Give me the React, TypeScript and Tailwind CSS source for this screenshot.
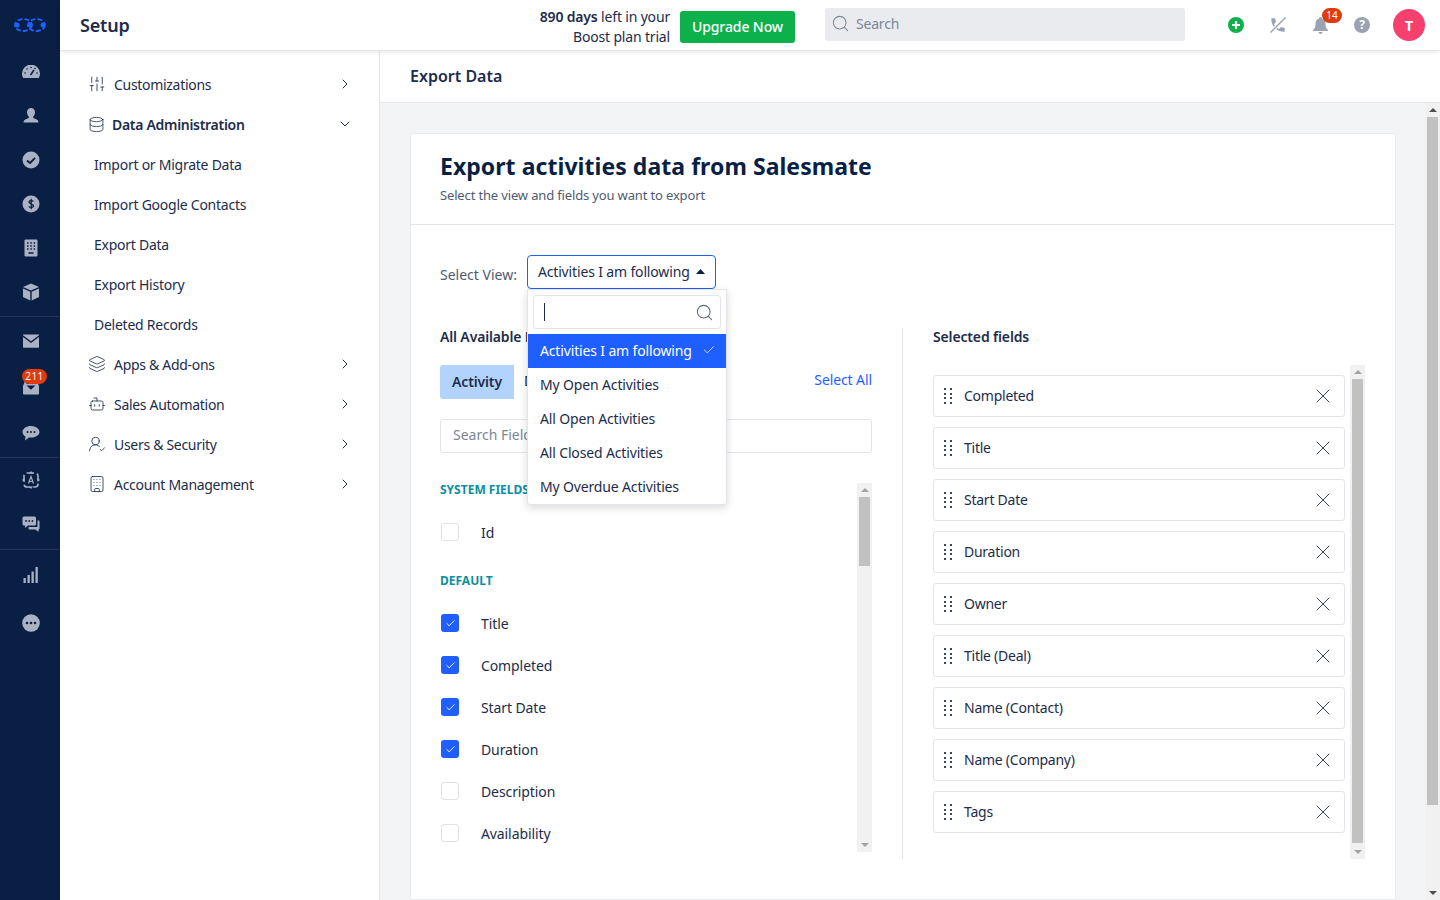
import React from 'react';
import { ChevronRight, ChevronDown, Search, Check, X, SlidersVertical, Database, Layers, Bot, UserRoundCheck, Building } from 'lucide-react';

const RailIcon = ({ children, y }: { children: React.ReactNode; y?: string }) => (
  <div className={`flex h-11 w-[60px] items-center justify-center pl-[2px] ${y || ''}`}>
    <svg width="18" height="18" viewBox="0 0 18 18" fill="#a9b2c3">{children}</svg>
  </div>
);

const Rail = () => (
  <div className="flex w-[60px] shrink-0 flex-col bg-[#0a1f44]">
    <div className="flex h-[50px] items-center justify-center">
      <svg width="32" height="14" viewBox="0 0 32 14" fill="none">
        <ellipse cx="9.5" cy="7" rx="8.5" ry="6" stroke="#1f5eff" strokeWidth="1.8" strokeDasharray="5 2" />
        <ellipse cx="22.5" cy="7" rx="8.5" ry="6" stroke="#1f5eff" strokeWidth="1.8" strokeDasharray="5 2" />
        <circle cx="3" cy="7" r="2.5" fill="#1f5eff" /><circle cx="16" cy="7" r="2.5" fill="#1f5eff" /><circle cx="29" cy="7" r="2.5" fill="#1f5eff" />
      </svg>
    </div>
    <RailIcon>
      <path d="M9 1.5A9 9 0 0 0 0 10.5c0 1.700.5 3.200 1.300 4.500h15.400c.8-1.300 1.300-2.800 1.300-4.500a9 9 0 0 0-9-9z" />
      <path d="M8.5 12 12 7" stroke="#0a1f44" strokeWidth="1.5" />
      <circle cx="5" cy="6" r=".8" fill="#0a1f44" /><circle cx="9" cy="4.5" r=".8" fill="#0a1f44" /><circle cx="3" cy="10" r=".8" fill="#0a1f44" /><circle cx="13" cy="5.5" r=".8" fill="#0a1f44" /><circle cx="15" cy="10" r=".8" fill="#0a1f44" />
    </RailIcon>
    <RailIcon>
      <path d="M9 1c2.400 0 4 1.800 4 4.200 0 1.800-.8 3.300-1.800 4.300v1.500c2 .9 5.300 1.400 5.300 4.500h-15c0-3.100 3.300-3.600 5.300-4.500V9.500C5.800 8.500 5 7 5 5.200 5 2.800 6.600 1 9 1z" />
    </RailIcon>
    <RailIcon>
      <circle cx="9" cy="9" r="8.5" />
      <path d="M5 9.500 8 12l5-5" fill="none" stroke="#0a1f44" strokeWidth="1.8" />
    </RailIcon>
    <RailIcon>
      <circle cx="9" cy="9" r="8.5" />
      <path d="M11.500 6.500C11 5.500 7 5 7 7c0 2.200 4.500 1.500 4.500 4 0 2-4 1.700-4.700.5M9.200 3.800v10.400" fill="none" stroke="#0a1f44" strokeWidth="1.3" />
    </RailIcon>
    <RailIcon>
      <rect x="2.5" y=".5" width="13" height="17" rx="1" />
      <path d="M5 4h1.500M8.300 4h1.500M11.600 4h1.500M5 7h1.500M8.300 7h1.500M11.600 7h1.500M5 10h1.500M8.300 10h1.500M11.600 10h1.500M6.500 14h5" stroke="#0a1f44" strokeWidth="1.3" />
    </RailIcon>
    <RailIcon>
      <path d="M9 .5 17 4 9 7.500 1 4z" />
      <path d="M1 5.500 8.300 8.800v8.700L1 14z" /><path d="M17 5.500 9.700 8.800v8.700L17 14z" />
    </RailIcon>
    <div className="mt-[2px] h-px w-[59px] bg-[#263857]" />
    <RailIcon y="mt-[2px]">
      <path d="M1 2.500h16v.7L9 9.300 1 3.200z" /><path d="M1 5 9 11l8-6v10a.8.8 0 0 1-.8.8H1.800A.8.800 0 0 1 1 15z" />
    </RailIcon>
    <div className="relative mt-[2px]">
      <RailIcon>
        <path d="M3 3h12l2 5v7.500a1 1 0 0 1-1 1H2a1 1 0 0 1-1-1V8z" />
        <path d="M4.500 5.500h9M6 8h6L9 11z" stroke="#0a1f44" strokeWidth="1.2" fill="#0a1f44" />
      </RailIcon>
      <div className="absolute left-[22px] top-[4px] flex h-[15px] w-[25px] items-center justify-center rounded-full bg-[#e03a0f] text-[10px] tracking-[0.4px] text-white">211</div>
    </div>
    <RailIcon y="mt-[2px]">
      <path d="M9 2C4.300 2 .5 4.700.5 8c0 1.900 1.200 3.500 3 4.600L3 16.500l4-3c.6.1 1.300.1 2 .1 4.700 0 8.500-2.600 8.500-5.600S13.700 2 9 2z" />
      <circle cx="5.5" cy="8" r="1" fill="#0a1f44" /><circle cx="9" cy="8" r="1" fill="#0a1f44" /><circle cx="12.5" cy="8" r="1" fill="#0a1f44" />
    </RailIcon>
    <div className="mt-[2px] h-px w-[59px] bg-[#263857]" />
    <RailIcon>
      <rect x="2" y="2" width="14" height="14" rx="3" fill="none" stroke="#a9b2c3" strokeWidth="1.6" strokeDasharray="7 3" />
      <path d="M6.500 12.500 9 5.500l2.500 7M7.500 10.500h3" fill="none" stroke="#a9b2c3" strokeWidth="1.2" />
      <path d="M0 9l2.500-2v4zM18 9l-2.500 2V7zM9 0l2 2.500H7zM9 18l-2-2.500h4z" />
    </RailIcon>
    <RailIcon>
      <path d="M2 1.500h10.500A1.500 1.500 0 0 1 14 3v6a1.500 1.500 0 0 1-1.500 1.500H6L3 13v-2.500H2A1.500 1.500 0 0 1 .5 9V3A1.500 1.500 0 0 1 2 1.500z" />
      <circle cx="4" cy="6" r=".9" fill="#0a1f44" /><circle cx="7.2" cy="6" r=".9" fill="#0a1f44" /><circle cx="10.4" cy="6" r=".9" fill="#0a1f44" />
      <path d="M15.500 5.500h1a1 1 0 0 1 1 1v7a1 1 0 0 1-1 1V17l-3-2.500H7.500a1 1 0 0 1-1-1V12h9z" />
    </RailIcon>
    <div className="mt-[3px] h-px w-[59px] bg-[#263857]" />
    <div className="flex h-[50px] items-center justify-center pl-[2px]">
      <svg width="18" height="18" viewBox="0 0 18 18" fill="#a9b2c3">
        <rect x="1.5" y="12" width="2.3" height="5" /><rect x="5.5" y="9" width="2.3" height="8" /><rect x="9.5" y="5.5" width="2.3" height="11.5" /><rect x="13.5" y="1" width="2.3" height="16" />
      </svg>
    </div>
    <RailIcon y="mt-px">
      <circle cx="9" cy="9" r="8.8" />
      <circle cx="5" cy="9" r="1.3" fill="#0a1f44" /><circle cx="9" cy="9" r="1.3" fill="#0a1f44" /><circle cx="13" cy="9" r="1.3" fill="#0a1f44" />
    </RailIcon>
  </div>
);

const TopBar = () => (
  <div className="relative z-10 flex h-[51px] shrink-0 items-center border-b border-[#e3e5ea] bg-white pl-5 shadow-[0_1px_4px_rgba(0,0,0,0.1)]">
    <div className="text-[18px] font-semibold tracking-[-0.2px] text-[#1d2c4b]">Setup</div>
    <div className="ml-auto mr-[10px] mt-[3px] text-right text-[14px] leading-5 tracking-[-0.17px] text-[#1d2c4b]">
      <div><span className="font-semibold">890 days</span> left in your</div>
      <div>Boost plan trial</div>
    </div>
    <button className="mt-[3px] flex h-8 w-[115px] items-center justify-center rounded-[3px] bg-[#0cb14b] text-[14px] font-medium tracking-[-0.1px] text-white">Upgrade Now</button>
    <div className="mb-[2px] ml-[30px] flex h-[33px] w-[360px] items-center gap-[6px] rounded-[3px] bg-[#e9ebef] pb-px pl-[6px] text-[14px] tracking-[-0.2px] text-[#7c8698]">
      <Search size={19} strokeWidth={1.3} />
      <span>Search</span>
    </div>
    <div className="ml-[43px] flex h-4 w-4 items-center justify-center rounded-full bg-[#0cb14b] text-white">
      <svg width="10" height="10" viewBox="0 0 10 10"><path d="M5 1v8M1 5h8" stroke="#fff" strokeWidth="2.2" /></svg>
    </div>
    <svg className="ml-[25px]" width="18" height="18" viewBox="0 0 24 24" fill="#9aa3b2">
      <path d="M6.620 10.790c1.440 2.830 3.760 5.140 6.590 6.590l2.200-2.200c.27-.27.67-.36 1.020-.24 1.120.37 2.330.57 3.570.57.55 0 1 .45 1 1V20c0 .55-.45 1-1 1-9.390 0-17-7.610-17-17 0-.55.45-1 1-1h3.500c.55 0 1 .45 1 1 0 1.250.2 2.450.57 3.570.11.35.03.74-.25 1.020l-2.200 2.200z" />
      <path d="M2 22 22 2" stroke="#fff" strokeWidth="4.5" />
      <path d="M2 22 22 2" stroke="#9aa3b2" strokeWidth="2" />
    </svg>
    <div className="relative ml-[25px]">
      <svg width="17" height="17" viewBox="0 0 17 17" fill="#9aa3b2">
        <path d="M8.500 0a1.300 1.300 0 0 1 1.300 1.500C12.300 2 13.500 4 13.500 6.500c0 4 1 5 2.500 6.500v1H1v-1c1.500-1.500 2.500-2.500 2.500-6.500C3.500 4 4.700 2 7.200 1.500A1.300 1.300 0 0 1 8.500 0z" />
        <path d="M6.500 15h4a2 2 0 0 1-4 0z" />
      </svg>
      <div className="absolute left-[10px] top-[-9px] flex h-[15px] w-5 items-center justify-center rounded-full bg-[#e03a0f] text-[10px] text-white">14</div>
    </div>
    <div className="ml-[25px] flex h-4 w-4 items-center justify-center rounded-full bg-[#9aa3b2] text-[12px] font-bold text-white">?</div>
    <div className="ml-[23px] mr-[15px] flex h-8 w-8 items-center justify-center rounded-full bg-[#f8406e] text-[14px] font-bold text-white">T</div>
  </div>
);

const NavItem = ({ icon, label }: { icon: React.ReactNode; label: string }) => (
  <div className="flex h-10 items-center pl-[28px] pr-[26px] text-[#1d2c4b]">
    <span className="flex w-[26px] text-[#1d2c4b]">{icon}</span>
    <span className="text-[14px] tracking-[-0.3px]">{label}</span>
    <ChevronRight className="ml-auto" size={16} strokeWidth={1.5} />
  </div>
);

const Nav = () => (
  <div className="w-[320px] shrink-0 border-r border-[#e3e5ea] bg-white pt-[13px]">
    <NavItem icon={<SlidersVertical size={18} strokeWidth={1.1} />} label="Customizations" />
    <div className="flex h-10 items-center pl-[28px] pr-[26px] text-[#1d2c4b]">
      <span className="flex w-[24px] text-[#1d2c4b]"><Database size={17} strokeWidth={1.1} /></span>
      <span className="text-[14px] font-semibold tracking-[-0.3px]">Data Administration</span>
      <ChevronDown className="ml-auto" size={16} strokeWidth={1.5} />
    </div>
    {['Import or Migrate Data', 'Import Google Contacts', 'Export Data', 'Export History', 'Deleted Records'].map((t) => (
      <div key={t} className="flex h-10 items-center pl-[34px] text-[14px] tracking-[-0.25px] text-[#1d2c4b]">{t}</div>
    ))}
    <NavItem icon={<Layers size={18} strokeWidth={1.1} />} label="Apps & Add-ons" />
    <NavItem icon={<Bot size={18} strokeWidth={1.1} />} label="Sales Automation" />
    <NavItem icon={<UserRoundCheck size={18} strokeWidth={1.1} />} label="Users & Security" />
    <NavItem icon={<Building size={18} strokeWidth={1.1} />} label="Account Management" />
  </div>
);

const Scrollbar = ({ className, thumb, arrow }: { className: string; thumb: string; arrow: string }) => (
  <div className={`flex flex-col items-center bg-[#f1f1f1] ${className}`}>
    <svg className="my-[5px] shrink-0" width="8" height="4" viewBox="0 0 8 4"><path d="M4 0l4 4H0z" fill={arrow} /></svg>
    <div className={`w-[11px] bg-[#c1c1c1] ${thumb}`} />
    <svg className="mb-[5px] mt-auto shrink-0" width="8" height="4" viewBox="0 0 8 4"><path d="M4 4 8 0H0z" fill={arrow} /></svg>
  </div>
);

const CheckRow = ({ label, on }: { label: string; on?: boolean }) => (
  <div className="flex h-[42px] items-center">
    {on ? (
      <div className="ml-px flex h-[18px] w-[18px] items-center justify-center rounded-[3px] bg-[#1f5eff] text-white"><Check size={11} strokeWidth={2} /></div>
    ) : (
      <div className="ml-px h-[18px] w-[18px] rounded-[3px] border border-[#dfe2e8] bg-white" />
    )}
    <span className="ml-[22px] text-[14px] tracking-[-0.1px] text-[#1d2c4b]">{label}</span>
  </div>
);

const Grip = () => (
  <svg className="shrink-0" width="10" height="16" viewBox="0 0 10 16" fill="#3a4763">
    {[0, 5, 9, 14].map((y) => (
      <React.Fragment key={y}><rect x="0" y={y} width="2" height="2" /><rect x="6" y={y} width="2" height="2" /></React.Fragment>
    ))}
  </svg>
);

const SelectedField = ({ label }: { label: string }) => (
  <div className="flex h-[42px] items-center rounded-[3px] border border-[#e3e5ea] bg-white pl-[10px] pr-[9px]">
    <Grip />
    <span className="mb-[2px] ml-[10px] text-[14px] tracking-[-0.25px] text-[#1d2c4b]">{label}</span>
    <X className="ml-auto text-[#3a4763]" size={24} strokeWidth={1} />
  </div>
);

const ViewDropdown = () => (
  <div className="absolute left-[116px] top-[64px] z-20 w-[200px] rounded-b-[3px] border border-[#e3e5ea] bg-white shadow-[0_3px_8px_rgba(0,0,0,0.15)]">
    <div className="mx-[5px] my-[5px] flex h-[34px] items-center justify-between rounded-[3px] border border-[#e3e5ea] pl-[10px] pr-[6px]">
      <div className="h-[18px] w-px bg-[#1d2c4b]" />
      <Search className="text-[#5c6779]" size={19} strokeWidth={1.3} />
    </div>
    <div className="flex h-[34px] items-center justify-between bg-[#1f5eff] pb-[2px] pl-3 pr-[10px] text-[14px] tracking-[-0.15px] text-white">
      Activities I am following
      <Check size={14} strokeWidth={1.3} />
    </div>
    {['My Open Activities', 'All Open Activities', 'All Closed Activities', 'My Overdue Activities'].map((t) => (
      <div key={t} className="flex h-[34px] items-center pb-[2px] pl-3 text-[14px] tracking-[-0.15px] text-[#1d2c4b]">{t}</div>
    ))}
  </div>
);

const App: React.FC = () => {
  return (
    <div className="flex h-[900px] w-[1440px] overflow-hidden bg-white font-['Noto_Sans',sans-serif]">
      <Rail />
      <div className="flex min-w-0 flex-1 flex-col">
        <TopBar />
        <div className="flex min-h-0 flex-1">
          <Nav />
          <div className="flex min-w-0 flex-1 flex-col">
            <div className="flex h-[52px] shrink-0 items-center border-b border-[#e3e5ea] bg-white pb-[2px] pl-[30px] text-[16px] font-semibold text-[#1d2c4b]">Export Data</div>
            <div className="flex min-h-0 flex-1 bg-[#f3f4f6]">
              <div className="ml-[30px] mt-[30px] w-[986px] shrink-0 rounded-t-[3px] border border-[#e9ebef] bg-white">
                <div className="h-[91px] border-b border-[#e3e5ea] pl-[29px] pt-[14px]">
                  <h1 className="text-[23px] font-bold leading-9 tracking-[0.05px] text-[#0a1f44]">Export activities data from Salesmate</h1>
                  <p className="mt-[2px] text-[13px] tracking-[-0.15px] text-[#4f5b70]">Select the view and fields you want to export</p>
                </div>
                <div className="relative pl-[29px] pr-[30px]">
                  <div className="flex items-start pt-[30px]">
                    <span className="mt-[9px] text-[14px] text-[#4f5b70]">Select View:</span>
                    <div className="ml-[10px] flex h-[34px] w-[189px] items-center justify-between rounded-[4px] border border-[#1f5eff] pb-[2px] pl-[10px] pr-[10px] text-[14px] tracking-[-0.15px] text-[#1d2c4b]">
                      Activities I am following
                      <svg width="9" height="5" viewBox="0 0 9 5"><path d="M4.500 0 9 5H0z" fill="#0a1f44" /></svg>
                    </div>
                  </div>
                  <ViewDropdown />
                  <div className="mt-[39px] flex">
                    <div className="w-[432px] shrink-0">
                      <div className="pt-px text-[14px] font-semibold leading-4 tracking-[-0.15px] text-[#1d2c4b]">All Available Fields</div>
                      <div className="mt-[20px] flex h-[34px] items-center justify-between">
                        <div className="flex items-center">
                          <div className="flex h-[34px] w-[74px] items-center justify-center rounded-l-[3px] bg-[#b3d3ff] pb-[2px] text-[14px] font-semibold tracking-[-0.15px] text-[#1d2c4b]">Activity</div>
                          <span className="mb-[3px] ml-[10px] text-[14px] text-[#1d2c4b]">Deal</span>
                        </div>
                        <span className="mb-[5px] text-[14px] tracking-[-0.1px] text-[#1f5eff]">Select All</span>
                      </div>
                      <div className="mt-[20px] flex h-[34px] items-center rounded-[3px] border border-[#e3e5ea] pb-[3px] pl-3 text-[14px] text-[#7c8698]">Search Fields</div>
                      <div className="mt-[30px] flex h-[369px]">
                        <div className="-mt-[2px] min-w-0 flex-1">
                          <div className="text-[12px] font-bold text-[#0a8fa3]">SYSTEM FIELDS</div>
                          <div className="mt-[12px]"><CheckRow label="Id" /></div>
                          <div className="mt-[19px] text-[12px] font-bold text-[#0a8fa3]">DEFAULT</div>
                          <div className="mt-[12px]">
                            <CheckRow label="Title" on />
                            <CheckRow label="Completed" on />
                            <CheckRow label="Start Date" on />
                            <CheckRow label="Duration" on />
                            <CheckRow label="Description" />
                            <CheckRow label="Availability" />
                          </div>
                        </div>
                        <Scrollbar className="w-[15px]" thumb="h-[69px]" arrow="#a3a3a3" />
                      </div>
                    </div>
                    <div className="ml-[30px] h-[531px] w-px bg-[#e3e5ea]" />
                    <div className="ml-[30px] min-w-0 flex-1">
                      <div className="pt-px text-[14px] font-semibold leading-4 tracking-[-0.15px] text-[#1d2c4b]">Selected fields</div>
                      <div className="mt-[20px] flex h-[494px]">
                        <div className="mr-[5px] mt-[10px] flex min-w-0 flex-1 flex-col gap-[10px]">
                          {['Completed', 'Title', 'Start Date', 'Duration', 'Owner', 'Title (Deal)', 'Name (Contact)', 'Name (Company)', 'Tags'].map((t) => (
                            <SelectedField key={t} label={t} />
                          ))}
                        </div>
                        <Scrollbar className="w-[15px]" thumb="h-[464px]" arrow="#a3a3a3" />
                      </div>
                    </div>
                  </div>
                </div>
              </div>
              <Scrollbar className="ml-auto w-[15px]" thumb="h-[688px]" arrow="#505050" />
            </div>
          </div>
        </div>
      </div>
    </div>
  );
};

export default App;
